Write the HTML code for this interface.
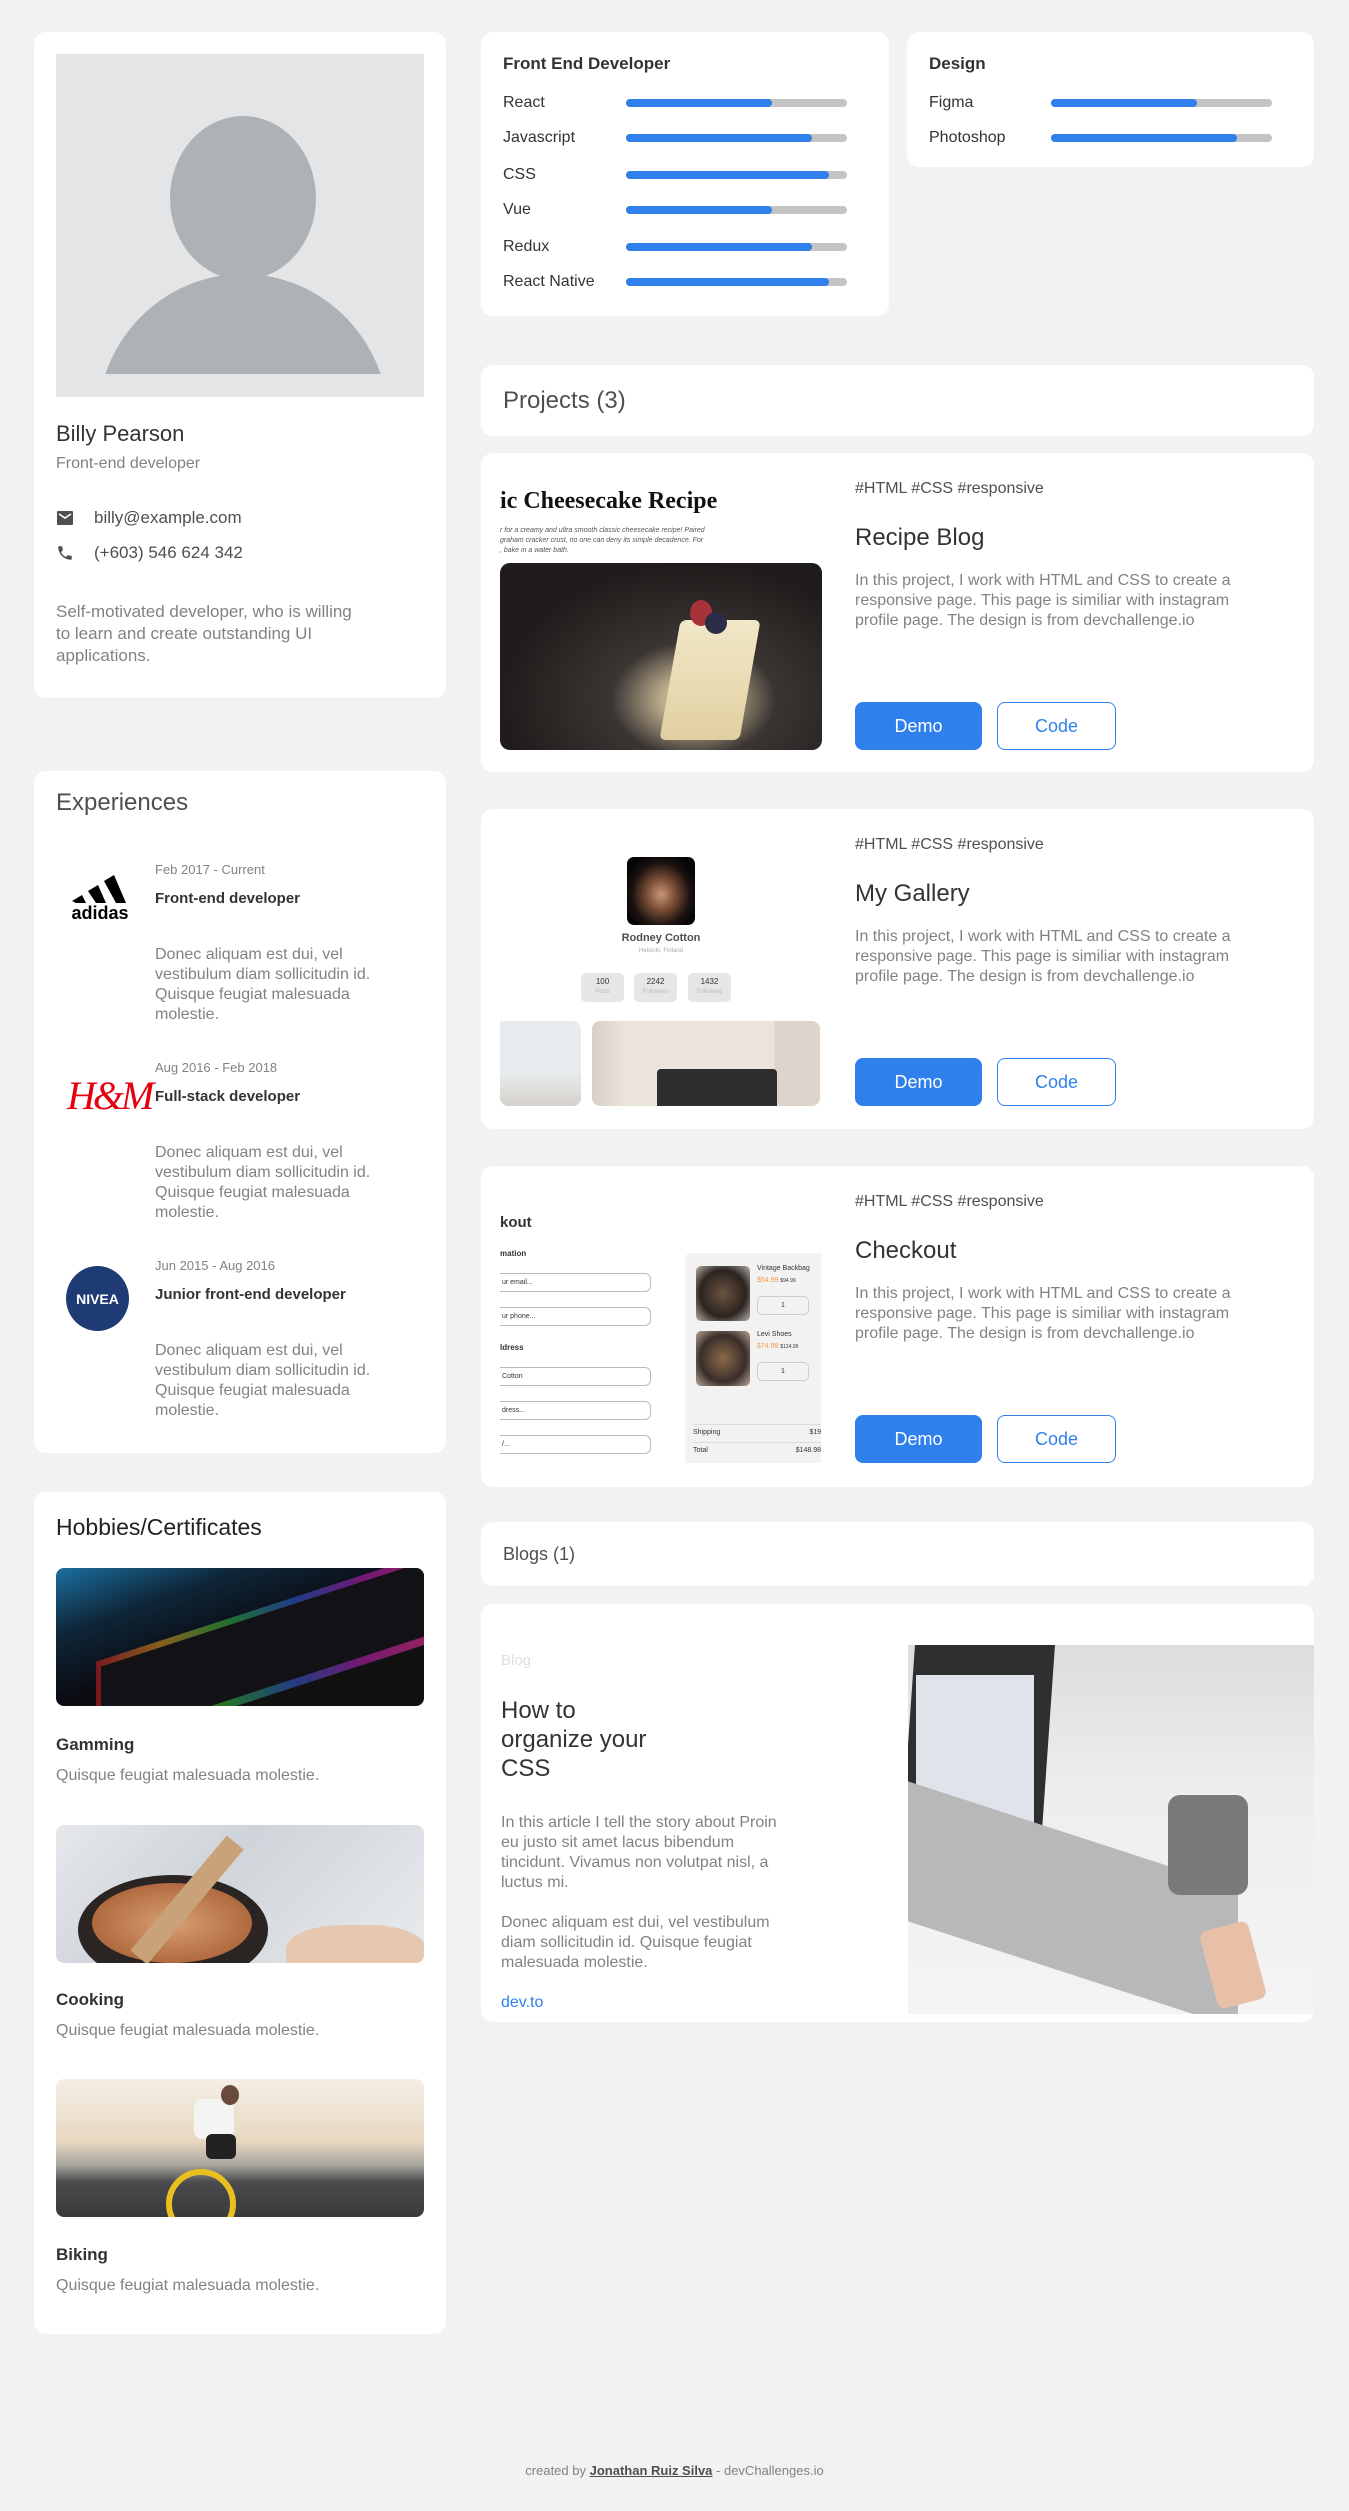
<!DOCTYPE html>
<html><head><meta charset="utf-8"><style>
*{margin:0;padding:0;box-sizing:border-box}
body{width:1349px;height:2511px;background:#f2f2f2;font-family:"Liberation Sans",sans-serif;position:relative;overflow:hidden;color:#333}
.c{position:absolute;background:#fff;border-radius:12px}
.a{position:absolute;white-space:nowrap}
.g{color:#828282}
.bar{position:absolute;height:8px;border-radius:4px;background:#c4c4c4;width:221px}
.bar i{display:block;height:8px;border-radius:4px;background:#2f80ed}
.btn{position:absolute;height:48px;border-radius:8px;font-size:18px;display:flex;align-items:center;justify-content:center}
.demo{background:#2f80ed;color:#fff;width:127px}
.code{border:1px solid #2f80ed;color:#2f80ed;width:119px}
.p{font-size:16px;line-height:20px;color:#828282}
</style></head><body>

<!-- profile -->
<div class="c" style="left:34px;top:32px;width:412px;height:666px">
 <div style="position:absolute;left:22px;top:22px;width:368px;height:343px;background:#e4e5e7;overflow:hidden">
  <div style="position:absolute;left:114px;top:62px;width:146px;height:164px;border-radius:50%;background:#aeb2b5"></div>
  <div style="position:absolute;left:41px;top:220px;width:292px;height:300px;border-radius:50%;background:#aeb2b5"></div>
  <div style="position:absolute;left:0;top:320px;width:368px;height:30px;background:#e4e5e7"></div>
 </div>
 <div class="a" style="left:22px;top:389px;font-size:22px;color:#333">Billy Pearson</div>
 <div class="a g" style="left:22px;top:423px;font-size:16px">Front-end developer</div>
 <svg style="position:absolute;left:22px;top:478px" width="18" height="16" viewBox="0 0 18 16"><rect x="1" y="1" width="16" height="14" rx="1" fill="#4f4f4f"/><path d="M3 4l6 4 6-4" stroke="#fff" stroke-width="1.6" fill="none"/></svg>
 <div class="a" style="left:60px;top:476px;font-size:17px;color:#4f4f4f">billy@example.com</div>
 <svg style="position:absolute;left:22px;top:512px" width="18" height="18" viewBox="0 0 24 24"><path fill="#4f4f4f" d="M6.6 10.8c1.4 2.8 3.8 5.1 6.6 6.6l2.2-2.2c.3-.3.7-.4 1-.2 1.1.4 2.3.6 3.6.6.6 0 1 .4 1 1V20c0 .6-.4 1-1 1C10.6 21 3 13.4 3 4c0-.6.4-1 1-1h3.5c.6 0 1 .4 1 1 0 1.3.2 2.5.6 3.6.1.3 0 .7-.2 1z"/></svg>
 <div class="a" style="left:60px;top:511px;font-size:17px;color:#4f4f4f">(+603) 546 624 342</div>
 <div class="a p" style="left:22px;top:569px;font-size:17px;line-height:22px">Self-motivated developer, who is willing<br>to learn and create outstanding UI<br>applications.</div>
</div>

<!-- skills -->
<div class="c" style="left:481px;top:32px;width:408px;height:284px">
 <div class="a" style="left:22px;top:22px;font-size:17px;font-weight:bold;color:#333">Front End Developer</div>
 <div class="a" style="left:22px;top:62px;font-size:16px">React</div><div class="bar" style="left:145px;top:67px"><i style="width:66%"></i></div>
 <div class="a" style="left:22px;top:97px;font-size:16px">Javascript</div><div class="bar" style="left:145px;top:102px"><i style="width:84%"></i></div>
 <div class="a" style="left:22px;top:134px;font-size:16px">CSS</div><div class="bar" style="left:145px;top:139px"><i style="width:92%"></i></div>
 <div class="a" style="left:22px;top:169px;font-size:16px">Vue</div><div class="bar" style="left:145px;top:174px"><i style="width:66%"></i></div>
 <div class="a" style="left:22px;top:206px;font-size:16px">Redux</div><div class="bar" style="left:145px;top:211px"><i style="width:84%"></i></div>
 <div class="a" style="left:22px;top:241px;font-size:16px">React Native</div><div class="bar" style="left:145px;top:246px"><i style="width:92%"></i></div>
</div>
<div class="c" style="left:907px;top:32px;width:407px;height:135px">
 <div class="a" style="left:22px;top:22px;font-size:17px;font-weight:bold">Design</div>
 <div class="a" style="left:22px;top:62px;font-size:16px">Figma</div><div class="bar" style="left:144px;top:67px"><i style="width:66%"></i></div>
 <div class="a" style="left:22px;top:97px;font-size:16px">Photoshop</div><div class="bar" style="left:144px;top:102px"><i style="width:84%"></i></div>
</div>

<!-- projects header -->
<div class="c" style="left:481px;top:365px;width:833px;height:71px">
 <div class="a" style="left:22px;top:22px;font-size:24px;color:#4f4f4f">Projects (3)</div>
</div>

<!-- project 1 -->
<div class="c" style="left:481px;top:453px;width:833px;height:319px">
 <div style="position:absolute;left:19px;top:27px;width:322px;height:270px;overflow:hidden;border-radius:0 0 10px 10px">
  <div class="a" style="left:0;top:8px;font-family:'Liberation Serif',serif;font-weight:bold;font-size:24px;color:#111">ic Cheesecake Recipe</div>
  <div class="a" style="left:0;top:46px;font-size:7px;font-style:italic;color:#555;line-height:10px">r for a creamy and ultra smooth classic cheesecake recipe! Paired<br>graham cracker crust, no one can deny its simple decadence. For<br>, bake in a water bath.</div>
  <div style="position:absolute;left:0;top:83px;width:322px;height:195px;border-radius:10px;background:radial-gradient(ellipse at 60% 70%,#d8cba8 0,#b8a98a 12%,#3a3533 30%,#1f1c1b 70%)"></div>
  <div style="position:absolute;left:170px;top:140px;width:80px;height:120px;background:linear-gradient(#f2e8c8,#e0cfa0);transform:skewX(-10deg);border-radius:6px"></div>
  <div style="position:absolute;left:190px;top:120px;width:22px;height:26px;border-radius:50%;background:#a8323a"></div>
  <div style="position:absolute;left:205px;top:132px;width:22px;height:22px;border-radius:50%;background:#2a2c48"></div>
 </div>
 <div class="a" style="left:374px;top:27px;font-size:16px;color:#4f4f4f">#HTML #CSS #responsive</div>
 <div class="a" style="left:374px;top:71px;font-size:24px;color:#333">Recipe Blog</div>
 <div class="a p" style="left:374px;top:118px">In this project, I work with HTML and CSS to create a<br>responsive page. This page is similiar with instagram<br>profile page. The design is from devchallenge.io</div>
 <div class="btn demo" style="left:374px;top:249px">Demo</div>
 <div class="btn code" style="left:516px;top:249px">Code</div>
</div>

<!-- project 2 -->
<div class="c" style="left:481px;top:809px;width:833px;height:320px">
 <div style="position:absolute;left:146px;top:48px;width:68px;height:68px;border-radius:7px;background:radial-gradient(ellipse at 50% 55%,#c89676 0,#7a4d36 30%,#1a1210 60%,#050505 80%)"></div>
 <div class="a" style="left:100px;top:123px;width:160px;text-align:center;font-size:11px;font-weight:bold;color:#4f4f4f">Rodney Cotton</div>
 <div class="a" style="left:100px;top:139px;width:160px;text-align:center;font-size:6px;color:#aaa">Helsinki, Finland</div>
 <div style="position:absolute;left:100px;top:164px;width:43px;height:29px;background:#e6e6e6;border-radius:5px;font-size:8px;text-align:center;padding-top:4px">100<br><span style="color:#bbb;font-size:6px">Posts</span></div>
 <div style="position:absolute;left:153px;top:164px;width:43px;height:29px;background:#e6e6e6;border-radius:5px;font-size:8px;text-align:center;padding-top:4px">2242<br><span style="color:#bbb;font-size:6px">Followers</span></div>
 <div style="position:absolute;left:207px;top:164px;width:43px;height:29px;background:#e6e6e6;border-radius:5px;font-size:8px;text-align:center;padding-top:4px">1432<br><span style="color:#bbb;font-size:6px">Following</span></div>
 <div style="position:absolute;left:19px;top:212px;width:81px;height:85px;border-radius:0 8px 8px 8px;background:linear-gradient(#e8ecee 60%,#d6d2cc)"></div>
 <div style="position:absolute;left:111px;top:212px;width:228px;height:85px;border-radius:8px;background:linear-gradient(90deg,#d9d0c6 0,#ebe4dc 15%,#ebe4dc 80%,#ddd5cb 80%)"></div>
 <div style="position:absolute;left:176px;top:260px;width:120px;height:37px;background:#2e2e2e;border-radius:4px 4px 0 0"></div>
 <div class="a" style="left:374px;top:27px;font-size:16px;color:#4f4f4f">#HTML #CSS #responsive</div>
 <div class="a" style="left:374px;top:71px;font-size:24px;color:#333">My Gallery</div>
 <div class="a p" style="left:374px;top:118px">In this project, I work with HTML and CSS to create a<br>responsive page. This page is similiar with instagram<br>profile page. The design is from devchallenge.io</div>
 <div class="btn demo" style="left:374px;top:249px">Demo</div>
 <div class="btn code" style="left:516px;top:249px">Code</div>
</div>

<!-- project 3 -->
<div class="c" style="left:481px;top:1166px;width:833px;height:321px">
 <div class="a" style="left:19px;top:48px;font-size:15px;font-weight:bold;color:#333">kout</div>
 <div class="a" style="left:19px;top:83px;font-size:8px;font-weight:bold">mation</div>
 <div style="position:absolute;left:19px;top:107px;width:151px;height:19px;border:1px solid #bbb;border-left:none;border-radius:0 6px 6px 0;font-size:7px;padding:5px 2px">ur email...</div>
 <div style="position:absolute;left:19px;top:141px;width:151px;height:19px;border:1px solid #bbb;border-left:none;border-radius:0 6px 6px 0;font-size:7px;padding:5px 2px">ur phone...</div>
 <div class="a" style="left:19px;top:177px;font-size:8px;font-weight:bold">ldress</div>
 <div style="position:absolute;left:19px;top:201px;width:151px;height:19px;border:1px solid #bbb;border-left:none;border-radius:0 6px 6px 0;font-size:7px;padding:5px 2px">Cotton</div>
 <div style="position:absolute;left:19px;top:235px;width:151px;height:19px;border:1px solid #bbb;border-left:none;border-radius:0 6px 6px 0;font-size:7px;padding:5px 2px">dress...</div>
 <div style="position:absolute;left:19px;top:269px;width:151px;height:19px;border:1px solid #bbb;border-left:none;border-radius:0 6px 6px 0;font-size:7px;padding:5px 2px">/...</div>
 <div style="position:absolute;left:204px;top:87px;width:136px;height:210px;background:#f2f2f2;border-radius:6px 0 0 0">
  <div style="position:absolute;left:11px;top:13px;width:54px;height:55px;border-radius:5px;background:radial-gradient(#6b5340,#2c2420 60%,#b8b2aa)"></div>
  <div class="a" style="left:72px;top:12px;font-size:7px">Vintage Backbag</div>
  <div class="a" style="left:72px;top:24px;font-size:7px;color:#f2994a">$54.99 <span style="color:#333;font-size:5px">$94.99</span></div>
  <div style="position:absolute;left:72px;top:43px;width:52px;height:19px;border:1px solid #ccc;border-radius:5px;font-size:7px;text-align:center;padding-top:5px">1</div>
  <div style="position:absolute;left:11px;top:78px;width:54px;height:55px;border-radius:5px;background:radial-gradient(#8a6a4a,#3a2e2a 60%,#b8a898)"></div>
  <div class="a" style="left:72px;top:78px;font-size:7px">Levi Shoes</div>
  <div class="a" style="left:72px;top:90px;font-size:7px;color:#f2994a">$74.99 <span style="color:#333;font-size:5px">$124.99</span></div>
  <div style="position:absolute;left:72px;top:109px;width:52px;height:19px;border:1px solid #ccc;border-radius:5px;font-size:7px;text-align:center;padding-top:5px">1</div>
  <div style="position:absolute;left:8px;top:171px;width:128px;border-top:1px solid #ddd;font-size:7px;padding-top:4px">Shipping<span style="float:right">$19</span></div>
  <div style="position:absolute;left:8px;top:189px;width:128px;border-top:1px solid #ddd;font-size:7px;padding-top:4px">Total<span style="float:right">$148.98</span></div>
 </div>
 <div class="a" style="left:374px;top:27px;font-size:16px;color:#4f4f4f">#HTML #CSS #responsive</div>
 <div class="a" style="left:374px;top:71px;font-size:24px;color:#333">Checkout</div>
 <div class="a p" style="left:374px;top:118px">In this project, I work with HTML and CSS to create a<br>responsive page. This page is similiar with instagram<br>profile page. The design is from devchallenge.io</div>
 <div class="btn demo" style="left:374px;top:249px">Demo</div>
 <div class="btn code" style="left:516px;top:249px">Code</div>
</div>

<!-- experiences -->
<div class="c" style="left:34px;top:771px;width:412px;height:682px">
 <div class="a" style="left:22px;top:18px;font-size:24px;color:#4f4f4f">Experiences</div>
 <svg style="position:absolute;left:28px;top:98px" width="76" height="52" viewBox="0 0 76 52"><path d="M10 32l10-6 4 8h-10z M26 22l10-6 8 18h-10z M42 12l10-6 12 28h-10z" fill="#000"/><text x="38" y="50" text-anchor="middle" font-family="Liberation Sans" font-weight="bold" font-size="18" fill="#000">adidas</text></svg>
 <div class="a g" style="left:121px;top:91px;font-size:13px">Feb 2017 - Current</div>
 <div class="a" style="left:121px;top:119px;font-size:15px;font-weight:bold;color:#333">Front-end developer</div>
 <div class="a p" style="left:121px;top:174px">Donec aliquam est dui, vel<br>vestibulum diam sollicitudin id.<br>Quisque feugiat malesuada<br>molestie.</div>
 <div class="a" style="left:33px;top:301px;font-family:'Liberation Serif',serif;font-style:italic;font-size:40px;color:#e50010;letter-spacing:-3px">H&amp;M</div>
 <div class="a g" style="left:121px;top:289px;font-size:13px">Aug 2016 - Feb 2018</div>
 <div class="a" style="left:121px;top:317px;font-size:15px;font-weight:bold;color:#333">Full-stack developer</div>
 <div class="a p" style="left:121px;top:372px">Donec aliquam est dui, vel<br>vestibulum diam sollicitudin id.<br>Quisque feugiat malesuada<br>molestie.</div>
 <div style="position:absolute;left:32px;top:495px;width:63px;height:65px;border-radius:50%;background:#1f3b73;color:#fff;font-weight:bold;font-size:14px;display:flex;align-items:center;justify-content:center">NIVEA</div>
 <div class="a g" style="left:121px;top:487px;font-size:13px">Jun 2015 - Aug 2016</div>
 <div class="a" style="left:121px;top:515px;font-size:15px;font-weight:bold;color:#333">Junior front-end developer</div>
 <div class="a p" style="left:121px;top:570px">Donec aliquam est dui, vel<br>vestibulum diam sollicitudin id.<br>Quisque feugiat malesuada<br>molestie.</div>
</div>

<!-- hobbies -->
<div class="c" style="left:34px;top:1492px;width:412px;height:842px">
 <div class="a" style="left:22px;top:22px;font-size:23px;color:#222">Hobbies/Certificates</div>
 <div style="position:absolute;left:22px;top:76px;width:368px;height:138px;border-radius:8px;background:linear-gradient(160deg,#1b6fa0 0,#0e2638 25%,#0b0b12 50%,#111 70%),#111;overflow:hidden">
  <div style="position:absolute;left:40px;top:40px;width:330px;height:90px;transform:skewY(-18deg);background:linear-gradient(90deg,#d02020,#e8a020,#30c040,#3060e0,#c020c0,#ff30a0);opacity:.55"></div>
  <div style="position:absolute;left:45px;top:45px;width:330px;height:75px;transform:skewY(-18deg);background:#121216"></div>
 </div>
 <div class="a" style="left:22px;top:243px;font-size:17px;font-weight:bold;color:#333">Gamming</div>
 <div class="a g" style="left:22px;top:275px;font-size:16px">Quisque feugiat malesuada molestie.</div>
 <div style="position:absolute;left:22px;top:333px;width:368px;height:138px;border-radius:8px;background:linear-gradient(135deg,#e6e8ec 0,#cfd4da 40%,#e9ebee 100%);overflow:hidden">
  <div style="position:absolute;left:22px;top:50px;width:190px;height:110px;border-radius:50%;background:#2a2422"></div>
  <div style="position:absolute;left:36px;top:58px;width:160px;height:80px;border-radius:50%;background:radial-gradient(#d9a070,#b06a40 70%)"></div>
  <div style="position:absolute;left:120px;top:0;width:22px;height:150px;background:#c9a27a;transform:rotate(40deg)"></div>
  <div style="position:absolute;left:230px;top:100px;width:140px;height:60px;border-radius:40%;background:#e6c8b0"></div>
 </div>
 <div class="a" style="left:22px;top:498px;font-size:17px;font-weight:bold;color:#333">Cooking</div>
 <div class="a g" style="left:22px;top:530px;font-size:16px">Quisque feugiat malesuada molestie.</div>
 <div style="position:absolute;left:22px;top:587px;width:368px;height:138px;border-radius:8px;background:linear-gradient(180deg,#f4efe6 0,#e8d8c0 45%,#a8a6a0 62%,#4a4a4c 75%,#3a3a3c 100%);overflow:hidden">
  <div style="position:absolute;left:110px;top:90px;width:70px;height:70px;border-radius:50%;border:6px solid #e8c020"></div>
  <div style="position:absolute;left:138px;top:20px;width:40px;height:40px;background:#f4f4f4;border-radius:8px"></div>
  <div style="position:absolute;left:150px;top:55px;width:30px;height:25px;background:#222;border-radius:6px"></div>
  <div style="position:absolute;left:165px;top:6px;width:18px;height:20px;background:#6a4a3a;border-radius:50%"></div>
 </div>
 <div class="a" style="left:22px;top:753px;font-size:17px;font-weight:bold;color:#333">Biking</div>
 <div class="a g" style="left:22px;top:785px;font-size:16px">Quisque feugiat malesuada molestie.</div>
</div>

<!-- blogs -->
<div class="c" style="left:481px;top:1522px;width:833px;height:64px">
 <div class="a" style="left:22px;top:22px;font-size:18px;color:#4f4f4f">Blogs (1)</div>
</div>
<div class="c" style="left:481px;top:1604px;width:833px;height:418px;overflow:hidden">
 <div class="a" style="left:20px;top:48px;font-size:15px;color:#e0e0e0">Blog</div>
 <div class="a" style="left:20px;top:92px;font-size:24px;line-height:29px;color:#333">How to<br>organize your<br>CSS</div>
 <div class="a p" style="left:20px;top:209px;line-height:20px">In this article I tell the story about Proin<br>eu justo sit amet lacus bibendum<br>tincidunt. Vivamus non volutpat nisl, a<br>luctus mi.<br><br>Donec aliquam est dui, vel vestibulum<br>diam sollicitudin id. Quisque feugiat<br>malesuada molestie.</div>
 <div class="a" style="left:20px;top:390px;font-size:16px;color:#2f80ed">dev.to</div>
 <div style="position:absolute;left:427px;top:41px;width:406px;height:369px;background:linear-gradient(180deg,#ddd 0,#eee 40%,#f4f4f4 100%);overflow:hidden">
  <div style="position:absolute;left:0;top:0;width:140px;height:200px;background:#2f2f2f;transform:skewX(-4deg)"></div>
  <div style="position:absolute;left:8px;top:30px;width:118px;height:160px;background:#dfe4ea"></div>
  <div style="position:absolute;left:0;top:190px;width:330px;height:140px;background:#b8b8b8;transform:skewY(18deg)"></div>
  <div style="position:absolute;left:260px;top:150px;width:80px;height:100px;border-radius:12px;background:#7a7a7a"></div>
  <div style="position:absolute;left:300px;top:280px;width:50px;height:80px;border-radius:8px;background:#e8c0a8;transform:rotate(-15deg)"></div>
 </div>
</div>

<div class="a" style="left:0;top:2463px;width:1349px;text-align:center;font-size:13px;color:#828282">created by <b style="text-decoration:underline;color:#4f4f4f">Jonathan Ruiz Silva</b> - devChallenges.io</div>
</body></html>
